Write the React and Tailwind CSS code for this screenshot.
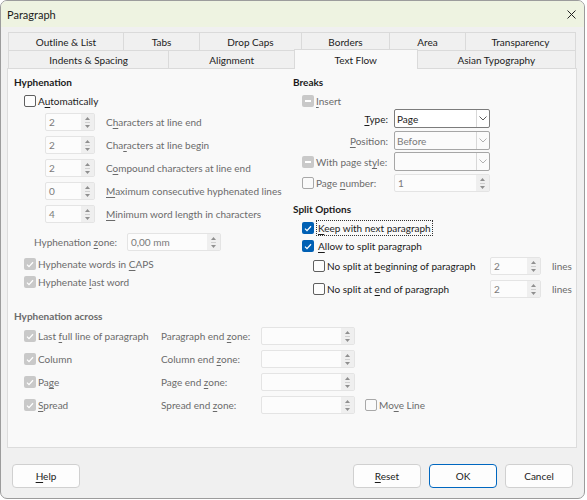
import React from "react";

const U = ({ children }) => (
  <span className="underline underline-offset-[2px] decoration-[1px]">{children}</span>
);

const Tri = ({ down }) => (
  <svg width="5" height="3" viewBox="0 0 5 3" className="block">
    {down ? <path d="M0 0 L5 0 L2.5 3Z" fill="#8f8f8f" /> : <path d="M0 3 L2.5 0 L5 3Z" fill="#8f8f8f" />}
  </svg>
);

function Spin({ className, value, h = "h-[18px]" }) {
  return (
    <div className={"flex border border-[#e4e4e4] rounded-[2px] bg-[#fcfcfc] " + h + " " + className}>
      <div className="flex-1 flex items-center pl-[3px] text-[#7a7a7a]">{value}</div>
      <div className="w-[13px] bg-[#efefef] flex flex-col items-center justify-center gap-[2px]">
        <Tri />
        <div className="w-[5px] h-px bg-[#cfcfcf]" />
        <Tri down />
      </div>
    </div>
  );
}

const Check = () => (
  <svg width="8" height="7" viewBox="0 0 8 7" className="block">
    <path d="M1 3.6 L3 5.6 L7 1.2" fill="none" stroke="#fff" strokeWidth="1.3" />
  </svg>
);

function Box({ kind }) {
  if (kind === "on")
    return (
      <div className="w-[12px] h-[12px] rounded-[2px] bg-[#0060b4] flex items-center justify-center shrink-0">
        <Check />
      </div>
    );
  if (kind === "onDis")
    return (
      <div className="w-[12px] h-[12px] rounded-[2px] bg-[#c9c9c9] flex items-center justify-center shrink-0">
        <Check />
      </div>
    );
  if (kind === "indDis")
    return (
      <div className="w-[12px] h-[12px] rounded-[2px] bg-[#c9c9c9] flex items-center justify-center shrink-0">
        <div className="w-[6px] h-[2px] bg-white" />
      </div>
    );
  if (kind === "offDis")
    return <div className="w-[12px] h-[12px] rounded-[2px] border border-[#a8a8a8] bg-[#fafafa] shrink-0" />;
  return <div className="w-[12px] h-[12px] rounded-[2px] border border-[#5f5f5f] bg-[#fdfdfd] shrink-0" />;
}

function Chevron({ dim }) {
  return (
    <svg width="8" height="5" viewBox="0 0 8 5" className="block">
      <path d="M0.5 0.5 L4 4 L7.5 0.5" fill="none" stroke={dim ? "#b0b0b0" : "#5a5a5a"} strokeWidth="1" />
    </svg>
  );
}

function Select({ value, dim }) {
  return (
    <div
      className={
        "w-[96px] h-[19px] flex border rounded-[2px] " +
        (dim ? "border-[#a6a6a6] bg-[#fbfbfb] text-[#7a7a7a]" : "border-[#7c7c7c] bg-white text-[#1b1b1b]")
      }
    >
      <div className="flex-1 flex items-center pl-[2px]">{value}</div>
      <div className="w-[13px] border-l border-[#d8d8d8] flex items-center justify-center">
        <Chevron dim={dim} />
      </div>
    </div>
  );
}

const Tab = ({ w, children }) => (
  <div className={"h-full flex items-center justify-center border border-[#dadada] -ml-px first:ml-0 bg-[#f0f0f0] text-[#1b1b1b] " + w}>
    {children}
  </div>
);

export default function App() {
  const dis = "text-[#6b6b6b]";
  return (
    <div className="w-[587px] h-[500px] bg-white font-['Lato',sans-serif] text-[10px] leading-none text-[#1b1b1b]">
      <div className="w-[585px] h-[499px] border border-[#9c9c9c] rounded-[7px] bg-[#f0f0f0] flex flex-col overflow-hidden">
        {/* title bar */}
        <div className="h-[26px] shrink-0 bg-[#eef3e1] flex items-center justify-between pl-[6px] pr-[8px]">
          <span className="text-[11px]">Paragraph</span>
          <svg width="9" height="9" viewBox="0 0 9 9">
            <path d="M0.5 0.5 L8.5 8.5 M8.5 0.5 L0.5 8.5" stroke="#222" strokeWidth="1" />
          </svg>
        </div>

        {/* tabs */}
        <div className="ml-[7px] mt-[5px] w-[568px] flex flex-col">
          <div className="h-[19px] flex">
            <Tab w="w-[116px]">Outline &amp; List</Tab>
            <Tab w="w-[77px]">Tabs</Tab>
            <Tab w="w-[103px]">Drop Caps</Tab>
            <Tab w="w-[89px]">Borders</Tab>
            <Tab w="w-[77px]">Area</Tab>
            <Tab w="w-[111px]">Transparency</Tab>
          </div>
          <div className="h-[19px] flex -mt-px relative z-10">
            <Tab w="w-[162px]">Indents &amp; Spacing</Tab>
            <Tab w="w-[127px]">Alignment</Tab>
            <div className="w-[124px] h-[20px] -ml-px -mt-[1px] flex items-center justify-center border border-b-0 border-[#dadada] bg-[#f9f9f9]">
              Text Flow
            </div>
            <Tab w="w-[160px]">Asian Typography</Tab>
          </div>
        </div>

        {/* panel */}
        <div className="ml-[6px] w-[570px] h-[380px] -mt-px border border-[#dcdcdc] bg-[#f9f9f9] flex flex-col">
          <div className="h-[231px] flex">
            {/* left column */}
            <div className="w-[285px] pl-[6px] flex flex-col">
              <div className="h-[18px] mt-[4px] flex items-center font-bold">Hyphenation</div>
              <div className="h-[18px] mt-[1px] flex items-center gap-[2px] ml-[10px]">
                <Box kind="off" />
                <span>A<U>u</U>tomatically</span>
              </div>
              {[
                ["2", <>C<U>h</U>aracters at line end</>],
                ["2", <>Cha<U>r</U>acters at line begin</>],
                ["2", <>C<U>o</U>mpound characters at line end</>],
                ["0", <><U>M</U>aximum consecutive hyphenated lines</>],
                ["4", <><U>M</U>inimum word length in characters</>],
              ].map(([v, l], i) => (
                <div key={i} className={"h-[18px] flex items-center ml-[31px] " + (i === 0 ? "mt-[3px]" : "mt-[5px]")}>
                  <Spin className="w-[50px]" value={v} />
                  <span className={"ml-[11px] " + dis}>{l}</span>
                </div>
              ))}
              <div className="h-[18px] mt-[10px] flex items-center ml-[20px]">
                <span className={"w-[93px] " + dis}>
                  Hyphenation <U>z</U>one:
                </span>
                <Spin className="w-[94px]" value="0,00 mm" />
              </div>
              <div className={"h-[18px] mt-[4px] flex items-center gap-[2px] ml-[10px] " + dis}>
                <Box kind="onDis" />
                <span>Hyphenate words in <U>C</U>APS</span>
              </div>
              <div className={"h-[18px] flex items-center gap-[2px] ml-[10px] " + dis}>
                <Box kind="onDis" />
                <span>Hyphenate <U>l</U>ast word</span>
              </div>
            </div>

            {/* right column */}
            <div className="flex-1 flex flex-col">
              <div className="h-[18px] mt-[4px] flex items-center font-bold">Breaks</div>
              <div className={"h-[16px] mt-[2px] flex items-center gap-[2px] ml-[9px] " + dis}>
                <Box kind="indDis" />
                <span><U>I</U>nsert</span>
              </div>
              <div className="h-[19px] flex items-center">
                <span className="w-[95px] text-right"><U>T</U>ype:</span>
                <div className="ml-[6px]"><Select value="Page" /></div>
              </div>
              <div className="h-[19px] mt-[3px] flex items-center">
                <span className={"w-[95px] text-right " + dis}><U>P</U>osition:</span>
                <div className="ml-[6px]"><Select value="Before" dim /></div>
              </div>
              <div className="h-[19px] mt-[2px] flex items-center">
                <div className={"w-[101px] flex items-center gap-[2px] pl-[9px] " + dis}>
                  <Box kind="indDis" />
                  <span>With page st<U>y</U>le:</span>
                </div>
                <Select value="" dim />
              </div>
              <div className="h-[18px] mt-[3px] flex items-center">
                <div className={"w-[101px] flex items-center gap-[2px] pl-[9px] " + dis}>
                  <Box kind="offDis" />
                  <span>Page <U>n</U>umber:</span>
                </div>
                <Spin className="w-[96px]" value="1" />
              </div>
              <div className="h-[18px] mt-[8px] flex items-center font-bold">Split Options</div>
              <div className="h-[18px] mt-[1px] flex items-center gap-[2px] ml-[9px]">
                <Box kind="on" />
                <span className="border border-dotted border-[#333] px-px py-[2px]"><U>K</U>eep with next paragraph</span>
              </div>
              <div className="h-[18px] flex items-center gap-[2px] ml-[9px]">
                <Box kind="on" />
                <span className="px-[2px]"><U>A</U>llow to split paragraph</span>
              </div>
              <div className="h-[18px] mt-[2px] flex items-center">
                <div className="w-[197px] flex items-center gap-[2px] pl-[20px]">
                  <Box kind="off" />
                  <span>No split at <U>b</U>eginning of paragraph</span>
                </div>
                <Spin className="w-[51px]" value="2" />
                <span className={"ml-[11px] " + dis}>lines</span>
              </div>
              <div className="h-[18px] mt-[5px] flex items-center">
                <div className="w-[197px] flex items-center gap-[2px] pl-[20px]">
                  <Box kind="off" />
                  <span>No split at <U>e</U>nd of paragraph</span>
                </div>
                <Spin className="w-[51px]" value="2" />
                <span className={"ml-[11px] " + dis}>lines</span>
              </div>
            </div>
          </div>

          {/* hyphenation across */}
          <div className={"pl-[6px] flex flex-col " + dis}>
            <div className="h-[18px] mt-[7px] flex items-center font-bold">Hyphenation across</div>
            {[
              [<>Last <U>f</U>ull line of paragraph</>, <>Paragraph end <U>z</U>one:</>],
              [<>Column</>, <>Column end <U>z</U>one:</>],
              [<>Pa<U>g</U>e</>, <>Page end <U>z</U>one:</>],
              [<><U>S</U>pread</>, <>Spread end <U>z</U>one:</>],
            ].map(([a, b], i) => (
              <div key={i} className={"h-[18px] flex items-center " + (i === 0 ? "mt-[2px]" : "mt-[5px]")}>
                <div className="w-[147px] flex items-center gap-[2px] pl-[10px]">
                  <Box kind="onDis" />
                  <span>{a}</span>
                </div>
                <span className="w-[100px]">{b}</span>
                <Spin className="w-[94px]" value="" />
                {i === 3 && (
                  <div className="ml-[10px] flex items-center gap-[2px]">
                    <Box kind="offDis" />
                    <span>Mo<U>v</U>e Line</span>
                  </div>
                )}
              </div>
            ))}
          </div>
        </div>

        {/* buttons */}
        <div className="mt-[16px] flex px-[11px]">
          <button className="w-[68px] h-[24px] rounded-[4px] border border-[#d0d0d0] bg-[#fdfdfd]"><U>H</U>elp</button>
          <div className="flex-1" />
          <div className="flex gap-[8px]">
            <button className="w-[68px] h-[24px] rounded-[4px] border border-[#d0d0d0] bg-[#fdfdfd]"><U>R</U>eset</button>
            <button className="w-[68px] h-[24px] rounded-[4px] border border-[#0067c0] bg-[#fdfdfd]">OK</button>
            <button className="w-[68px] h-[24px] rounded-[4px] border border-[#d0d0d0] bg-[#fdfdfd]">Cancel</button>
          </div>
        </div>
      </div>
    </div>
  );
}
